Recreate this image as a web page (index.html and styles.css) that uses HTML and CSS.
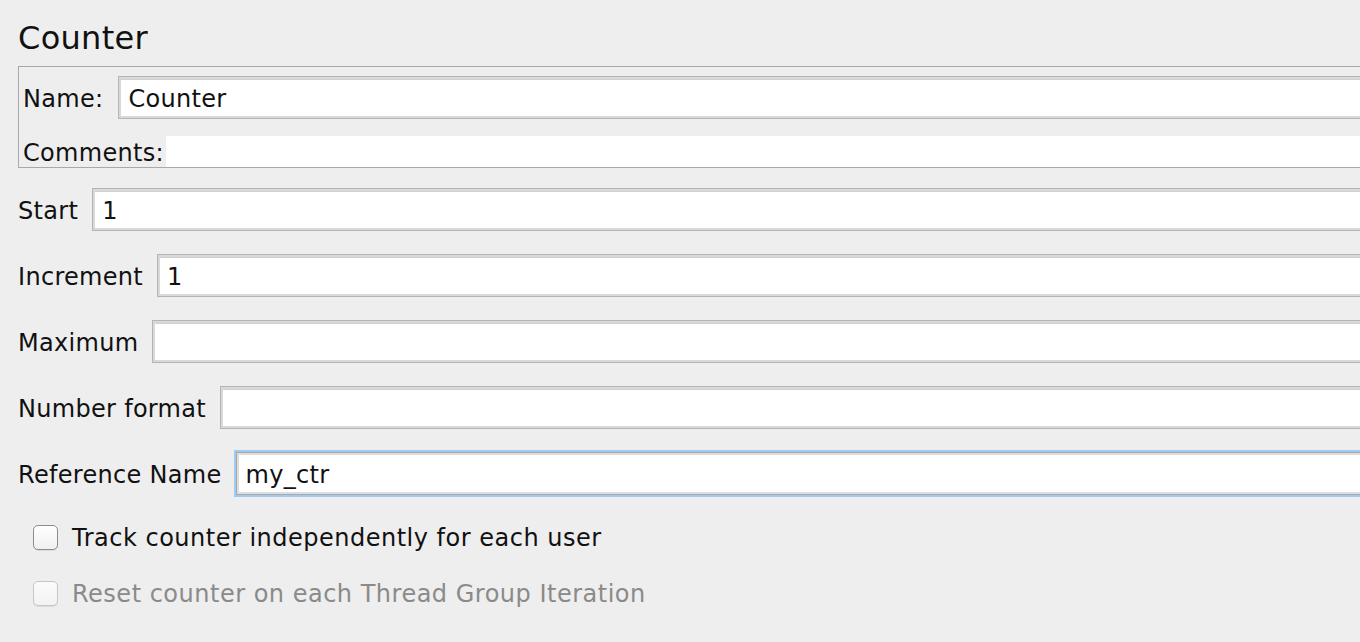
FILE: index.html
```html
<!DOCTYPE html>
<html>
<head>
<meta charset="utf-8">
<link rel="stylesheet" href="styles.css">
</head>
<body>
<div class="page">
  <h1 class="title">Counter</h1>
  <div class="name-panel">
    <div class="name-row">
      <span class="label">Name:</span>
      <div class="field">Counter</div>
    </div>
    <div class="comments-row">
      <span class="label">Comments:</span>
      <div class="comments"></div>
    </div>
  </div>
  <div class="rows">
    <div class="row"><span class="label">Start</span><div class="field">1</div></div>
    <div class="row"><span class="label">Increment</span><div class="field">1</div></div>
    <div class="row"><span class="label">Maximum</span><div class="field"></div></div>
    <div class="row"><span class="label">Number format</span><div class="field"></div></div>
    <div class="row"><span class="label">Reference Name</span><div class="field focused">my_ctr</div></div>
  </div>
  <div class="checks">
    <div class="check"><span class="box"></span><span class="check-label">Track counter independently for each user</span></div>
    <div class="check disabled"><span class="box"></span><span class="check-label">Reset counter on each Thread Group Iteration</span></div>
  </div>
</div>
</body>
</html>
```

FILE: styles.css
```css
html, body {
  margin: 0;
  padding: 0;
  background: #eeeeee;
  overflow: hidden;
}
body {
  width: 1360px;
  height: 642px;
  font-family: "DejaVu Sans", "Liberation Sans", sans-serif;
  color: #111;
}
.page {
  width: 1400px;
  padding-top: 18px;
}
.title {
  margin: 0 0 8px 18px;
  font-size: 32px;
  font-weight: normal;
  line-height: 40px;
  letter-spacing: 0.3px;
  color: #111;
}
.label {
  font-size: 24px;
  line-height: 30px;
  padding-top: 3px;
  letter-spacing: 0.3px;
  white-space: nowrap;
}
.name-panel {
  margin-left: 18px;
  border: 1px solid #a9a9a9;
  border-right: none;
  padding: 9px 0 0 4px;
  display: flex;
  flex-direction: column;
  gap: 17px;
}
.name-row {
  display: flex;
  align-items: center;
  gap: 15px;
}
.comments-row {
  display: flex;
  align-items: flex-end;
}
.comments-row .label {
  line-height: 28px;
  padding-bottom: 0;
  margin-right: 2px;
}
.comments {
  flex: 1;
  height: 31px;
  background: #ffffff;
}
.field {
  flex: 1;
  box-sizing: border-box;
  height: 43px;
  background: #ffffff;
  border: 1px solid #b4b4b4;
  box-shadow: inset 0 0 0 2px #d9d9d9, inset 0 2px 0 1px #d0d0d0;
  padding: 0 0 0 9px;
  font-size: 24px;
  line-height: 44px;
  letter-spacing: 0.3px;
  color: #111;
}
.field.focused {
  border-color: #a8a8a8;
  box-shadow: 0 0 0 2px #9fcaf2, inset 0 0 0 2px #dedede;
}
.rows {
  margin-top: 20px;
  padding-left: 18px;
  display: flex;
  flex-direction: column;
  gap: 23px;
}
.row {
  display: flex;
  align-items: center;
  gap: 14px;
}
.checks {
  margin-top: 26px;
  padding-left: 33px;
  display: flex;
  flex-direction: column;
  gap: 24px;
}
.check {
  display: flex;
  align-items: center;
  gap: 14px;
  height: 32px;
}
.box {
  box-sizing: border-box;
  width: 25px;
  height: 25px;
  border: 1px solid #8c8c8c;
  border-radius: 5px;
  background: linear-gradient(#ffffff, #f0f0f0);
  box-shadow: 0 1px 0 rgba(0,0,0,0.08);
}
.check-label {
  font-size: 24px;
  line-height: 30px;
  padding-top: 2px;
  letter-spacing: 0.5px;
  color: #111;
  white-space: nowrap;
}
.check.disabled .box {
  border-color: #c6c6c6;
  background: linear-gradient(#fbfbfb, #f2f2f2);
}
.check.disabled .check-label {
  color: #8a8a8a;
}
```
